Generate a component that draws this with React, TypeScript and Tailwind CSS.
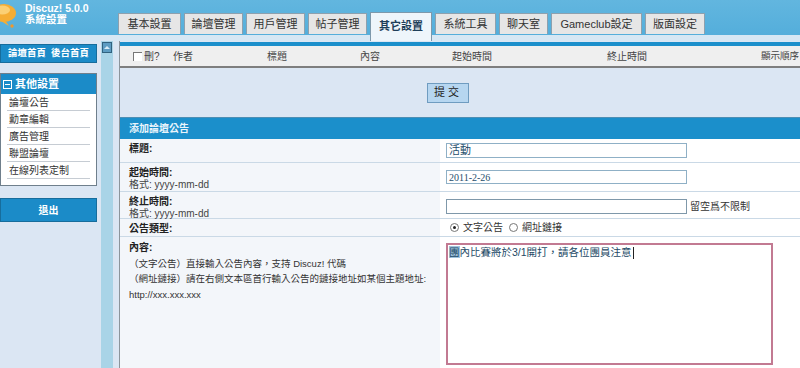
import React from "react";

const tabs = [
  { label: "基本設置", w: "w-[63px]" },
  { label: "論壇管理", w: "w-[59px]" },
  { label: "用戶管理", w: "w-[59px]" },
  { label: "帖子管理", w: "w-[59px]" },
  { label: "其它設置", w: "w-[62px]", active: true },
  { label: "系統工具", w: "w-[61px]" },
  { label: "聊天室", w: "w-[49px]" },
  { label: "Gameclub設定", w: "w-[91px]" },
  { label: "版面設定", w: "w-[60px]" },
];

const menu = ["論壇公告", "勳章編輯", "廣告管理", "聯盟論壇", "在線列表定制"];

function Logo() {
  return (
    <div className="flex w-[118px] gap-[9px]">
      <svg width="16" height="30" viewBox="0 0 16 30" className="shrink-0">
        <ellipse cx="4" cy="13" rx="12" ry="9" fill="#f5ad34" />
        <ellipse cx="2" cy="10" rx="8" ry="4.5" fill="#fbd075" />
        <path d="M5 20 L9 26 L1 21 Z" fill="#f5ad34" />
        <circle cx="12" cy="26" r="1.7" fill="#f0972c" />
      </svg>
      <div className="pt-[3px] text-[10.5px] font-bold leading-[11px] text-white">
        <div>Discuz! 5.0.0</div>
        <div>系統設置</div>
      </div>
    </div>
  );
}

function Radio({ on }: { on?: boolean }) {
  return (
    <span className="inline-flex h-[9px] w-[9px] items-center justify-center rounded-full border border-[#777] bg-white">
      {on && <span className="h-[3px] w-[3px] rounded-full bg-[#222]" />}
    </span>
  );
}

function Row({
  h,
  label,
  sub,
  children,
}: {
  h: string;
  label: string;
  sub?: string;
  children?: React.ReactNode;
}) {
  return (
    <div className={`flex ${h} border-b border-[#cad9e6]`}>
      <div className="w-[320px] shrink-0 bg-[#f3f6fa] pl-[9px] pt-[4px] leading-[12px]">
        <div className="font-bold text-[#222]">{label}</div>
        {sub && <div className="text-[#444]">{sub}</div>}
      </div>
      <div className="flex flex-1 items-center bg-white pl-[6px]">{children}</div>
    </div>
  );
}

export default function App() {
  return (
    <div className="h-[368px] w-[800px] overflow-hidden bg-[#dbe6f3] font-['Liberation_Sans','Noto_Sans_CJK_TC',sans-serif] text-[10px] text-[#333]">
      <header className="flex h-[41px] bg-[linear-gradient(to_bottom,#62b6df_0,#54aedb_35px,#d6e7f4_35px,#d6e7f4_41px)]">
        <Logo />
        <div className="flex gap-[3px] pt-[13px]">
          {tabs.map((t) =>
            t.active ? (
              <div
                key={t.label}
                className={`${t.w} -mt-[1px] flex h-[29px] justify-center border border-b-0 border-[#7d98ab] bg-[#eef5fb] pt-[5px] text-[11px] font-bold text-[#1f3f5a]`}
              >
                {t.label}
              </div>
            ) : (
              <div
                key={t.label}
                className={`${t.w} flex h-[21px] items-center justify-center border border-b-0 border-[#8da0ae] bg-[#e6e6e6] text-[11px] text-[#333]`}
              >
                {t.label}
              </div>
            )
          )}
        </div>
      </header>

      <div className="flex">
        <aside className="w-[97px] shrink-0 pt-[3px]">
          <div className="flex h-[19px] items-center justify-center gap-[5px] border border-[#176d9c] bg-[#1b8bc8] text-[9.5px] font-bold text-white">
            <span>論壇首頁</span>
            <span>後台首頁</span>
          </div>
          <div className="mt-[10px] border border-[#6f7f8c] bg-white pb-[6px]">
            <div className="flex h-[20px] items-center gap-[3px] bg-[#1b8bc8] pl-[2px] text-[11px] font-bold text-white">
              <span className="flex h-[9px] w-[9px] items-center justify-center border border-white">
                <span className="h-px w-[5px] bg-white" />
              </span>
              其他設置
            </div>
            {menu.map((m) => (
              <div key={m} className="mx-[6px] flex h-[17px] items-center border-b border-[#c6ccd3] pl-[2px] text-[#333]">
                {m}
              </div>
            ))}
          </div>
          <div className="mt-[12px] flex h-[24px] items-center justify-center border border-[#176d9c] bg-[#1b8bc8] font-bold text-white">
            退出
          </div>
        </aside>

        <div className="ml-[4px] h-[330px] w-[12px] shrink-0 bg-[#a9d4e7] pt-px">
          <div className="ml-px flex h-[11px] w-[10px] items-center justify-center border border-[#31627f] bg-[#5d9cc2]">
            <span className="h-0 w-0 border-x-[3px] border-b-[3px] border-x-transparent border-b-[#d8ecf7]" />
          </div>
        </div>

        <main className="ml-[6px] min-w-0 flex-1 border-l border-[#8c959c] pt-px">
          <div className="border-t-[4px] border-[#1b8fcb]">
            <div className="flex h-[22px] items-center overflow-hidden border-b-2 border-[#7e7e7e] bg-[#efefef] pl-[13px] text-[#444]">
              <div className="flex w-[40px] shrink-0 items-center gap-[2px]">
                <span className="h-[9px] w-[9px] border-l border-t border-[#777] bg-white" />
                刪?
              </div>
              <div className="w-[94px] shrink-0">作者</div>
              <div className="w-[93px] shrink-0">標題</div>
              <div className="w-[92px] shrink-0">內容</div>
              <div className="w-[155px] shrink-0">起始時間</div>
              <div className="w-[154px] shrink-0">終止時間</div>
              <div className="shrink-0 whitespace-nowrap text-[9.5px]">顯示順序</div>
            </div>
          </div>

          <div className="flex h-[49px] items-center justify-center pr-[24px]">
            <div className="flex h-[20px] w-[42px] items-center justify-center border border-[#6f9cc0] bg-[#b6d6f0] text-[11px] tracking-[3px] text-[#222]">
              提交
            </div>
          </div>

          <div className="border-t border-[#4e8fb4]">
            <div className="flex h-[21px] items-center bg-[#1b8fcb] pl-[9px] font-bold text-[#e8f4fb]">添加論壇公告</div>
            <Row h="h-[24px]" label="標題:">
              <div className="flex h-[15px] w-[241px] items-center border border-[#8fb0c6] bg-white pl-[2px] text-[11px] text-[#1f4e6c]">
                活動
              </div>
            </Row>
            <Row h="h-[29px]" label="起始時間:" sub="格式: yyyy-mm-dd">
              <div className="flex h-[14px] w-[241px] items-center border border-[#8fb0c6] bg-white pl-[2px] font-['Liberation_Serif',serif] text-[10px] text-[#1f4e6c]">
                2011-2-26
              </div>
            </Row>
            <Row h="h-[27px]" label="終止時間:" sub="格式: yyyy-mm-dd">
              <div className="flex items-end gap-[3px] pt-[3px]">
                <div className="h-[15px] w-[241px] border border-[#7f98aa] bg-white" />
                <span className="text-[#333]">留空爲不限制</span>
              </div>
            </Row>
            <Row h="h-[18px]" label="公告類型:">
              <div className="flex items-center gap-[4px] pl-[4px]">
                <Radio on />
                <span className="mr-[2px]">文字公告</span>
                <Radio />
                <span>網址鏈接</span>
              </div>
            </Row>
            <div className="flex h-[140px]">
              <div className="w-[320px] shrink-0 bg-[#f3f6fa] pl-[9px] pt-[3px] text-[9.5px] leading-[15.5px]">
                <div className="text-[10px] font-bold text-[#222]">內容:</div>
                <div className="whitespace-nowrap">（文字公告）直接輸入公告內容，支持 Discuz! 代碼</div>
                <div className="whitespace-nowrap">（網址鏈接）請在右側文本區首行輸入公告的鏈接地址如某個主題地址:</div>
                <div>http://xxx.xxx.xxx</div>
              </div>
              <div className="flex-1 bg-white pl-[6px] pt-[6px]">
                <div className="h-[122px] w-[327px] border-2 border-[#c27a92] bg-white px-px pt-px text-[10.5px] leading-[13px] text-[#1d4a66]">
                  <span className="bg-[#9fc3dd]">團</span>內比賽將於3/1開打，請各位團員注意
                  <span className="ml-px inline-block h-[12px] w-px bg-[#222] align-middle" />
                </div>
              </div>
            </div>
          </div>
        </main>
      </div>
    </div>
  );
}
